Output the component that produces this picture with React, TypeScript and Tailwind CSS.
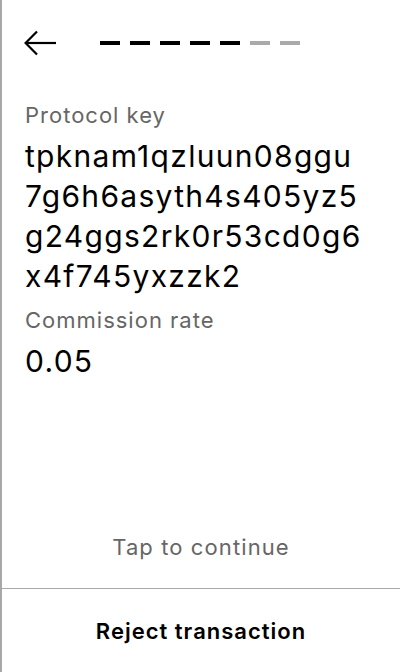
import React from 'react';

const steps = [true, true, true, true, true, false, false];

const BackArrow = () => (
  <svg width="32" height="26" viewBox="0 0 32 26" fill="none" stroke="#000" strokeWidth="2.2">
    <path d="M32 13H2" />
    <path d="M13 1.5L1.6 13L13 24.5" />
  </svg>
);

export default function App() {
  return (
    <div
      className="flex h-[672px] w-full flex-col border-l-2 border-[#a8a8a8] bg-white text-black"
      style={{ fontFamily: 'Inter, "Noto Sans", sans-serif' }}
    >
      {/* Header */}
      <div className="flex h-[86px] items-center pl-[22px]">
        <BackArrow />
        <div className="ml-[44px] flex gap-[10px]">
          {steps.map((done, i) => (
            <div key={i} className={`h-[4px] w-[20px] ${done ? 'bg-black' : 'bg-[#aaaaaa]'}`} />
          ))}
        </div>
      </div>

      {/* Details */}
      <div className="mt-[15px] pl-[23px] pr-2">
        <div className="text-[22px] leading-[28px] tracking-[1px] text-[#666666]">Protocol key</div>
        <div className="mt-[7px] whitespace-nowrap text-[30px] leading-[40px] tracking-[1.3px]">
          tpknam1qzluun08ggu
          <br />
          7g6h6asyth4s405yz5
          <br />
          g24ggs2rk0r53cd0g6
          <br />
          x4f745yxzzk2
        </div>
        <div className="mt-[10px] text-[22px] leading-[28px] tracking-[1px] text-[#666666]">Commission rate</div>
        <div className="mt-[7px] text-[30px] leading-[40px] tracking-[1.3px]">0.05</div>
      </div>

      <div className="flex-1" />

      <div className="pb-[27px] text-center text-[22px] leading-[28px] tracking-[1.1px] text-[#666666]">
        Tap to continue
      </div>

      <div className="flex h-[84px] items-center justify-center border-t border-[#a8a8a8]">
        <span className="text-[22px] font-semibold leading-[28px] tracking-[1px]">Reject transaction</span>
      </div>
    </div>
  );
}
